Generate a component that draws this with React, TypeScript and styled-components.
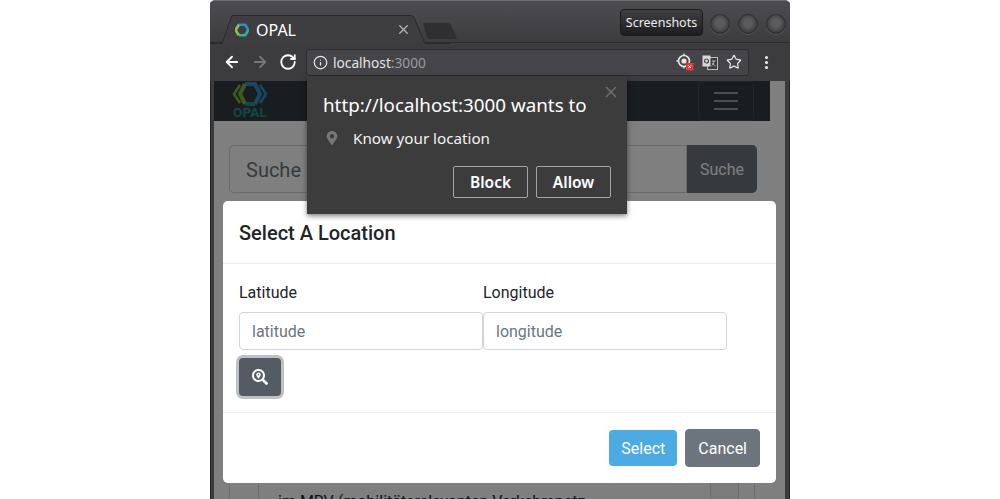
import React from 'react';
import styled, { createGlobalStyle } from 'styled-components';
import { ArrowLeft, ArrowRight, Info, RotateCw, Star, X } from 'lucide-react';
import { FaMapMarkerAlt, FaSearchLocation } from 'react-icons/fa';

const CHROME_FONT = '"Noto Sans", "Open Sans", sans-serif';
const PAGE_FONT = 'Roboto, "Liberation Sans", sans-serif';

const GlobalStyle = createGlobalStyle`
  html, body {
    margin: 0;
    height: 100%;
    background: #fff;
    overflow: hidden;
  }
  * {
    box-sizing: border-box;
  }
`;

const Stage = styled.div`
  display: flex;
  justify-content: center;
  height: 499px;
`;

const BrowserWindow = styled.div`
  position: relative;
  display: flex;
  flex-direction: column;
  width: 580px;
  height: 499px;
  overflow: hidden;
  background: #3b3a3d;
  border-radius: 5px 5px 0 0;
  border-top: 1px solid #6f6e71;
  box-shadow: inset 1px 0 0 #252427, inset -1px 0 0 #252427;
`;

const TitleBar = styled.div`
  position: relative;
  flex: 0 0 42px;
  display: flex;
  align-items: flex-start;
  padding: 8px 1px 0 410px;
  background: linear-gradient(#4d4c50, #3c3b3e);
  border-bottom: 1px solid #2c2b2e;
`;

const TabShape = styled.svg`
  position: absolute;
  left: 0;
  top: 13px;
`;

const TabContent = styled.div`
  position: absolute;
  left: 25px;
  top: 15px;
  width: 176px;
  height: 27px;
  display: flex;
  align-items: center;
  gap: 7px;
  color: #fff;
  font: 16px ${CHROME_FONT};
`;

const TabClose = styled.span`
  display: flex;
  margin-left: auto;
  color: #b5b5b7;
`;

const NewTab = styled.svg`
  position: absolute;
  left: 212px;
  top: 21px;
`;

const ScreenshotsButton = styled.div`
  width: 83px;
  height: 27px;
  display: flex;
  align-items: center;
  justify-content: center;
  color: #eee;
  font: 12.5px ${CHROME_FONT};
  border: 1px solid #1b1a1c;
  border-radius: 4px;
  background: linear-gradient(#403f42, #1d1c1e);
`;

const WindowControls = styled.div`
  display: flex;
  gap: 8px;
  margin-left: 7px;
  padding-top: 5px;
`;

const WindowControl = styled.span`
  width: 20px;
  height: 20px;
  border-radius: 50%;
  background: radial-gradient(circle at 50% 45%, #5c5b5e 0 30%, #3a393c 72%);
  border: 1px solid #2e2d30;
  box-shadow: 0 1px 0 #59585b;
`;

const Toolbar = styled.div`
  flex: 0 0 38px;
  display: flex;
  align-items: center;
  padding: 0 0 0 13px;
  background: #3c3b3e;
  color: #fff;
`;

const NavIcons = styled.div`
  display: flex;
  align-items: center;
  gap: 10px;
  width: 83px;
`;

const NavIcon = styled.span<{ $dim?: boolean }>`
  display: flex;
  color: ${({ $dim }) => ($dim ? '#76757a' : '#fff')};
`;

const Omnibox = styled.div`
  width: 443px;
  height: 27px;
  display: flex;
  align-items: center;
  gap: 5px;
  padding: 0 6px;
  background: #454448;
  border: 1px solid #2e2d30;
  border-radius: 3px;
  color: #e8e8e8;
`;

const Address = styled.span`
  flex: 1;
  font: 13.7px ${CHROME_FONT};
  color: #e4e4e4;
`;

const AddressPort = styled.span`
  color: #9b9b9d;
`;

const OmniboxIcons = styled.div`
  display: flex;
  align-items: center;
  gap: 8px;
`;

const MenuDots = styled.div`
  display: flex;
  flex-direction: column;
  gap: 2px;
  margin-left: 16px;
`;

const MenuDot = styled.span`
  width: 3px;
  height: 3px;
  border-radius: 50%;
  background: #eee;
`;

const Viewport = styled.div`
  position: relative;
  flex: 1;
  margin: 0 5px 0 4px;
  background: #fff;
  overflow: hidden;
  font-family: ${PAGE_FONT};
`;

const PageColumn = styled.div`
  width: 556px;
  font-size: 16px;
  color: #212529;
`;

const Navbar = styled.div`
  height: 40px;
  display: flex;
  align-items: flex-start;
  justify-content: space-between;
  padding: 0 16px 0 18px;
  background: #343a40;
`;

const Logo = styled.div`
  display: flex;
  flex-direction: column;
  align-items: center;
  width: 36px;
`;

const LogoText = styled.span`
  color: #25908e;
  font: 700 13.5px/12px ${PAGE_FONT};
  letter-spacing: 0.2px;
`;

const Toggler = styled.div`
  width: 56px;
  height: 40px;
  display: flex;
  flex-direction: column;
  align-items: center;
  justify-content: center;
  gap: 6px;
  border: 1px solid rgba(255, 255, 255, 0.1);
  border-radius: 4px;
`;

const TogglerBar = styled.span`
  width: 24px;
  height: 2px;
  background: rgba(255, 255, 255, 0.5);
`;

const SearchRow = styled.div`
  display: flex;
  margin: 24px 13px 0 15px;
`;

const SearchInput = styled.div`
  flex: 1;
  height: 48px;
  padding: 2px 16px 0;
  display: flex;
  align-items: center;
  font-size: 20px;
  color: #6c757d;
  background: #fff;
  border: 1px solid #ced4da;
  border-radius: 4.8px 0 0 4.8px;
`;

const SearchButton = styled.div`
  width: 70px;
  height: 48px;
  display: flex;
  align-items: center;
  justify-content: center;
  color: #fff;
  background: #6c757d;
  border-radius: 0 4.8px 4.8px 0;
`;

const OuterCard = styled.div`
  width: 526px;
  height: 400px;
  margin: 16px 15px 0;
  padding-left: 28px;
  border: 1px solid rgba(0, 0, 0, 0.125);
`;

const CardColumn = styled.div`
  width: 481px;
  height: 100%;
  padding-top: 20px;
  background: rgba(0, 0, 0, 0.03);
  border-right: 1px solid rgba(0, 0, 0, 0.125);
`;

const InnerCard = styled.div`
  width: 453px;
  height: 100%;
  padding: 259px 19px 0;
  background: #fff;
  border: 1px solid rgba(0, 0, 0, 0.125);
  line-height: 24px;
`;

const Backdrop = styled.div`
  position: absolute;
  inset: 0;
  background: rgba(0, 0, 0, 0.5);
`;

const Modal = styled.div`
  position: absolute;
  left: 9px;
  top: 120px;
  width: 553px;
  display: flex;
  flex-direction: column;
  background: #fff;
  border-radius: 4.8px;
  color: #212529;
  font-size: 16px;
`;

const ModalHeader = styled.div`
  padding: 17px 16px 15px;
  border-bottom: 1px solid #e9ecef;
  font-size: 20px;
  font-weight: 500;
  line-height: 30px;
`;

const ModalBody = styled.div`
  padding: 16px;
`;

const FieldRow = styled.div`
  display: flex;
`;

const Field = styled.div`
  width: 244px;
`;

const FieldLabel = styled.label`
  display: block;
  margin-bottom: 8px;
  padding-top: 1px;
  line-height: 23px;
`;

const FieldInput = styled.input`
  display: block;
  width: 100%;
  height: 38px;
  padding: 6px 12px;
  font: 16px ${PAGE_FONT};
  color: #495057;
  background: #fff;
  border: 1px solid #ced4da;
  border-radius: 4px;
  &::placeholder {
    color: #6c757d;
    opacity: 1;
  }
`;

const LocateButton = styled.button`
  display: flex;
  align-items: center;
  justify-content: center;
  width: 42px;
  height: 38px;
  margin-top: 8px;
  padding: 0;
  color: #fff;
  background: #545b62;
  border: none;
  border-radius: 4px;
  box-shadow: 0 0 0 3px rgba(108, 117, 125, 0.45);
`;

const ModalFooter = styled.div`
  display: flex;
  align-items: center;
  justify-content: flex-end;
  gap: 8px;
  padding: 16px;
  border-top: 1px solid #e9ecef;
`;

const ActionButton = styled.button<{ $variant: 'select' | 'cancel' }>`
  height: ${({ $variant }) => ($variant === 'select' ? '36px' : '38px')};
  padding: 0 12px;
  font: 16px ${PAGE_FONT};
  color: #fff;
  background: ${({ $variant }) => ($variant === 'select' ? '#4dabe4' : '#6c757d')};
  border: ${({ $variant }) => ($variant === 'select' ? 'none' : '1px solid #6c757d')};
  border-radius: 4px;
`;

const PermissionPopup = styled.div`
  position: absolute;
  left: 97px;
  top: 75px;
  width: 320px;
  height: 138px;
  padding: 17px 16px 0;
  background: #3c3c3c;
  color: #fff;
  font-family: ${CHROME_FONT};
  box-shadow: 0 2px 5px rgba(0, 0, 0, 0.5);
`;

const PopupClose = styled.span`
  position: absolute;
  right: 7px;
  top: 7px;
  display: flex;
  color: #6f6f6f;
`;

const PopupTitle = styled.div`
  font-size: 18.8px;
  line-height: 24px;
`;

const PopupPermission = styled.div`
  display: flex;
  align-items: center;
  gap: 14px;
  margin-top: 11px;
  padding-left: 2px;
  font-size: 15.2px;
  line-height: 20px;
  color: #f2f2f2;
`;

const PermissionIcon = styled.span`
  display: flex;
  color: #77777a;
`;

const PopupActions = styled.div`
  display: flex;
  justify-content: flex-end;
  gap: 8px;
  margin-top: 18px;
`;

const PopupButton = styled.div<{ $width: number }>`
  width: ${({ $width }) => $width}px;
  height: 32px;
  display: flex;
  align-items: center;
  justify-content: center;
  font-size: 15.5px;
  font-weight: 600;
  border: 1px solid #a5a5a5;
  border-radius: 2px;
`;

const OpalMark = () => (
  <svg width="14" height="14" viewBox="0 0 24 24" fill="none">
    <path d="M1 12L6.5 3H17.5L23 12" stroke="#2f8fc4" strokeWidth="4.5" strokeLinejoin="round" />
    <path d="M23 12L17.5 21H6.5" stroke="#2bb5a0" strokeWidth="4.5" />
    <path d="M6.5 3L1 12L6.5 21" stroke="#8cc04b" strokeWidth="4.5" />
  </svg>
);

const LogoMark = () => (
  <svg width="36" height="25" viewBox="0 0 36 25" fill="none">
    <path d="M8 4 L2 13 L8 22" stroke="#7fb43f" strokeWidth="2.6" />
    <path d="M28 4 L34 13 L28 22" stroke="#2f8fc4" strokeWidth="2.6" />
    <path d="M13 3 H23 L28 13 L23 23" stroke="#2f8fc4" strokeWidth="4" />
    <path d="M23 23 H13" stroke="#25908e" strokeWidth="4" />
    <path d="M13 23 L8 13 L13 3" stroke="#7fb43f" strokeWidth="4" />
  </svg>
);

const GeoBlockedIcon = () => (
  <svg width="18" height="18" viewBox="0 0 18 18" fill="none">
    <circle cx="8" cy="8" r="5.5" stroke="#e6e6e6" strokeWidth="1.6" />
    <circle cx="8" cy="8" r="2.6" fill="#e6e6e6" />
    <path d="M8 0.5V3M8 13V15.5M0.5 8H3" stroke="#e6e6e6" strokeWidth="1.4" />
    <rect x="10" y="10" width="7.5" height="7.5" fill="#e53935" />
    <path d="M12.4 12.4l2.6 2.6M15 12.4l-2.6 2.6" stroke="#fff" strokeWidth="1" />
  </svg>
);

const TranslateIcon = () => (
  <svg width="16" height="15" viewBox="0 0 16 15" fill="none">
    <rect x="5.5" y="2.5" width="10" height="12" fill="#3c3b3e" stroke="#bdbdbd" />
    <rect x="0.5" y="0.5" width="8" height="11" fill="#d8d8d8" />
    <circle cx="4.5" cy="6" r="2" stroke="#444" strokeWidth="1.2" />
    <path d="M10 6h3.5M11.8 6c0 2.5-1 4-2.3 5M10.5 8c.6 1.4 1.8 2.5 3.2 3" stroke="#bdbdbd" />
  </svg>
);

const App = () => (
  <Stage>
    <GlobalStyle />
    <BrowserWindow>
      <TitleBar>
        <TabShape width="240" height="30" viewBox="0 0 240 30" fill="none">
          <path d="M0 29.5H12L22 1.5H201Q203 1.5 204 3.5L215 29.5H240" fill="#3e3d40" stroke="#2a292c" />
        </TabShape>
        <NewTab width="37" height="18" viewBox="0 0 37 18">
          <path d="M1 1H26Q28 1 29 3L35 17H8Q6 17 5 15Z" fill="#2f2e31" />
        </NewTab>
        <TabContent>
          <OpalMark />
          <span>OPAL</span>
          <TabClose>
            <X size={15} strokeWidth={2} />
          </TabClose>
        </TabContent>
        <ScreenshotsButton>Screenshots</ScreenshotsButton>
        <WindowControls>
          <WindowControl />
          <WindowControl />
          <WindowControl />
        </WindowControls>
      </TitleBar>
      <Toolbar>
        <NavIcons>
          <NavIcon>
            <ArrowLeft size={18} strokeWidth={2.4} />
          </NavIcon>
          <NavIcon $dim>
            <ArrowRight size={18} strokeWidth={2.4} />
          </NavIcon>
          <NavIcon>
            <RotateCw size={18} strokeWidth={2.4} />
          </NavIcon>
        </NavIcons>
        <Omnibox>
          <Info size={15} />
          <Address>
            localhost<AddressPort>:3000</AddressPort>
          </Address>
          <OmniboxIcons>
            <GeoBlockedIcon />
            <TranslateIcon />
            <Star size={16} strokeWidth={1.8} />
          </OmniboxIcons>
        </Omnibox>
        <MenuDots>
          <MenuDot />
          <MenuDot />
          <MenuDot />
        </MenuDots>
      </Toolbar>
      <Viewport>
        <PageColumn>
          <Navbar>
            <Logo>
              <LogoMark />
              <LogoText>OPAL</LogoText>
            </Logo>
            <Toggler>
              <TogglerBar />
              <TogglerBar />
              <TogglerBar />
            </Toggler>
          </Navbar>
          <SearchRow>
            <SearchInput>Suche</SearchInput>
            <SearchButton>Suche</SearchButton>
          </SearchRow>
          <OuterCard>
            <CardColumn>
              <InnerCard>im MRV (mobilitätsrelevanten Verkehrsnetz</InnerCard>
            </CardColumn>
          </OuterCard>
        </PageColumn>
        <Backdrop />
        <Modal>
          <ModalHeader>Select A Location</ModalHeader>
          <ModalBody>
            <FieldRow>
              <Field>
                <FieldLabel>Latitude</FieldLabel>
                <FieldInput placeholder="latitude" />
              </Field>
              <Field>
                <FieldLabel>Longitude</FieldLabel>
                <FieldInput placeholder="longitude" />
              </Field>
            </FieldRow>
            <LocateButton>
              <FaSearchLocation size={16} />
            </LocateButton>
          </ModalBody>
          <ModalFooter>
            <ActionButton $variant="select">Select</ActionButton>
            <ActionButton $variant="cancel">Cancel</ActionButton>
          </ModalFooter>
        </Modal>
      </Viewport>
      <PermissionPopup>
        <PopupClose>
          <X size={18} strokeWidth={2} />
        </PopupClose>
        <PopupTitle>http://localhost:3000 wants to</PopupTitle>
        <PopupPermission>
          <PermissionIcon>
            <FaMapMarkerAlt size={14} />
          </PermissionIcon>
          Know your location
        </PopupPermission>
        <PopupActions>
          <PopupButton $width={75}>Block</PopupButton>
          <PopupButton $width={75}>Allow</PopupButton>
        </PopupActions>
      </PermissionPopup>
    </BrowserWindow>
  </Stage>
);

export default App;
